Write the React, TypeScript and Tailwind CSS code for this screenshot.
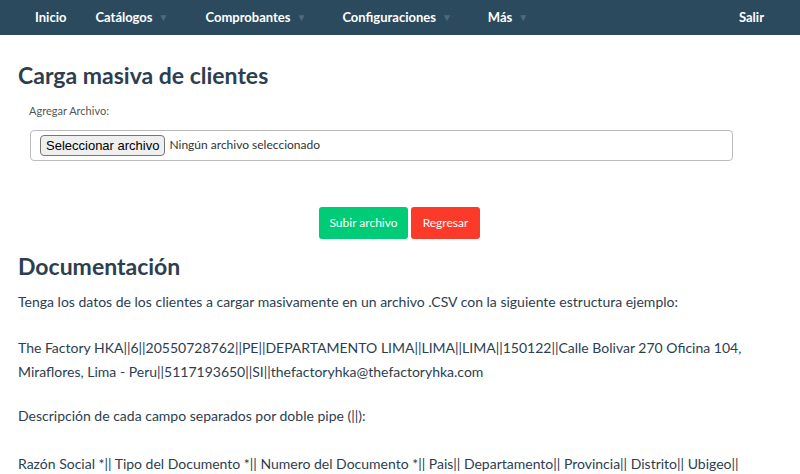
export default function App() {
  const caret = <span className="ml-1.5 text-[10px] text-[#4e6a7c]">▼</span>
  return (
    <div className="h-[474px] overflow-hidden bg-white text-[#2c3e50]" style={{ fontFamily: 'Lato, "Open Sans", sans-serif' }}>
      <nav className="flex h-[35px] items-center bg-[#2c4a5e] px-[35px] text-[13px] font-bold text-white">
        <span>Inicio</span>
        <span className="ml-[29px] flex items-center">Catálogos{caret}</span>
        <span className="ml-[37px] flex items-center">Comprobantes{caret}</span>
        <span className="ml-[36px] flex items-center">Configuraciones{caret}</span>
        <span className="ml-[36px] flex items-center">Más{caret}</span>
        <span className="ml-auto mr-[1px]">Salir</span>
      </nav>
      <div className="px-[18px]">
        <h1 className="mt-[25px] text-[23px] font-bold leading-[30px] text-[#2c3e50]">Carga masiva de clientes</h1>
        <p className="mt-[13px] pl-[11px] text-[11px] text-[#555]">Agregar Archivo:</p>
        <div className="ml-[12px] mt-[10px] flex h-[31px] w-[703px] items-center rounded border border-[#bbb] px-[9px] text-[12px] text-[#333]">
          <button className="rounded-sm border border-[#767676] bg-[#efefef] px-[5px] py-px text-[13px] leading-[17px] text-black" style={{ fontFamily: '"Liberation Sans", Arial, sans-serif' }}>Seleccionar archivo</button>
          <span className="ml-1">Ningún archivo seleccionado</span>
        </div>
        <div className="mt-[46px] flex justify-center gap-[3px] pr-[1px]">
          <button className="h-[32px] w-[89px] rounded-[3px] bg-[#00cc77] text-[12px] text-white">Subir archivo</button>
          <button className="h-[32px] w-[69px] rounded-[3px] bg-[#fb3a2a] text-[12px] text-white">Regresar</button>
        </div>
        <h2 className="mt-[12px] text-[23px] font-bold leading-[30px]">Documentación</h2>
        <div className="mt-[9px] text-[14px] leading-[24px] text-[#2c3e50]">
          <p>Tenga los datos de los clientes a cargar masivamente en un archivo .CSV con la siguiente estructura ejemplo:</p>
          <p className="mt-[22px]">The Factory HKA||6||20550728762||PE||DEPARTAMENTO LIMA||LIMA||LIMA||150122||Calle Bolivar 270 Oficina 104, Miraflores, Lima - Peru||5117193650||SI||thefactoryhka@thefactoryhka.com</p>
          <p className="mt-[20px]">Descripción de cada campo separados por doble pipe (||):</p>
          <p className="mt-[24px]">Razón Social *|| Tipo del Documento *|| Numero del Documento *|| Pais|| Departamento|| Provincia|| Distrito|| Ubigeo||</p>
        </div>
      </div>
    </div>
  )
}
